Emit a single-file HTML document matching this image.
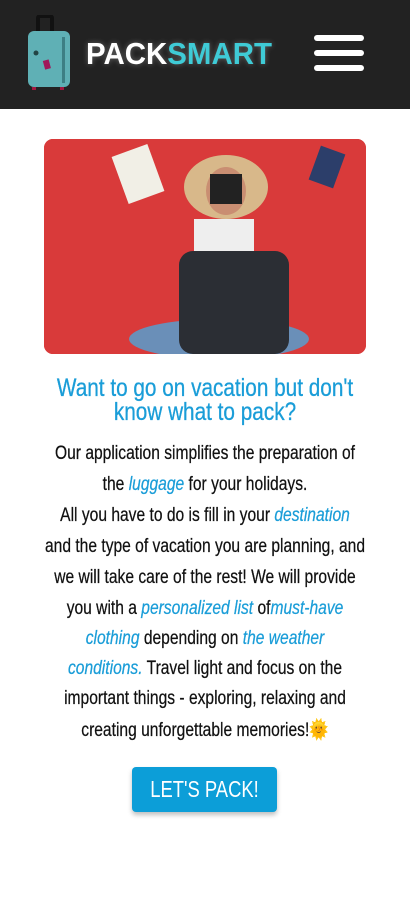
<!DOCTYPE html>
<html><head><meta charset="utf-8"><style>
*{margin:0;padding:0;box-sizing:border-box}
body{width:410px;height:915px;background:#fff;font-family:"Liberation Sans",sans-serif;overflow:hidden;position:relative}
.hdr{height:109px;background:#222;position:relative}
.logo{position:absolute;left:86px;top:36px;font-weight:900;font-size:31px;letter-spacing:0px;color:#fff;text-shadow:0 0 6px rgba(255,255,255,.3);transform:scaleX(.95);transform-origin:left}
.logo span{color:#3fcbd6}
.bar{position:absolute;left:314px;width:50px;height:6px;border-radius:3px;background:#fff}
.img{position:absolute;left:44px;top:139px;width:322px;height:215px;border-radius:9px;overflow:hidden;background:#d63838}
.t{position:absolute;left:-50px;width:510px;text-align:center;white-space:nowrap;transform:scaleX(.8);transform-origin:center}
.h{color:#1a9dd8;font-size:25px;line-height:24px;transform:scaleX(.83);-webkit-text-stroke:.3px #1a9dd8}
.l{font-size:19.5px;color:#111;-webkit-text-stroke:.25px #111}
.l i{color:#1a9dd8;-webkit-text-stroke:.25px #1a9dd8}
.btn{position:absolute;left:132px;top:767px;width:145px;height:45px;background:#0c9ed8;color:#fff;border-radius:4px;box-shadow:0 3px 5px rgba(0,0,0,.25)}
.btn div{position:absolute;left:-20px;width:185px;text-align:center;font-size:23px;line-height:45px;transform:scaleX(.8)}
</style></head><body>
<div class="hdr">
<svg style="position:absolute;left:26px;top:15px" width="46" height="76" viewBox="0 0 46 76">
<rect x="12" y="1" width="14" height="18" rx="2" fill="none" stroke="#111" stroke-width="4"/>
<rect x="2" y="16" width="42" height="56" rx="6" fill="#5fb0b5"/>
<rect x="36" y="22" width="3" height="46" fill="#3d7f84"/>
<circle cx="10" cy="38" r="2.5" fill="#244"/>
<rect x="18" y="45" width="6" height="9" fill="#a0185a" transform="rotate(-15 21 50)"/>
<rect x="6" y="72" width="4" height="3" fill="#a01840"/><rect x="34" y="72" width="4" height="3" fill="#a01840"/>
</svg>
<div class="logo">PACK<span>SMART</span></div>
<div class="bar" style="top:35px"></div><div class="bar" style="top:50px"></div><div class="bar" style="top:65px"></div>
</div>
<div class="img"><svg width="322" height="215" viewBox="0 0 322 215">
<rect width="322" height="215" fill="#d93a3a"/>
<ellipse cx="175" cy="200" rx="90" ry="20" fill="#6a8fb8"/>
<rect x="150" y="80" width="60" height="40" fill="#eee"/>
<ellipse cx="182" cy="48" rx="42" ry="32" fill="#d8b88a"/>
<ellipse cx="182" cy="52" rx="20" ry="24" fill="#c98e72"/>
<rect x="166" y="35" width="32" height="30" fill="#222"/>
<rect x="75" y="10" width="38" height="50" fill="#f1efe6" transform="rotate(-20 94 35)"/>
<rect x="270" y="10" width="26" height="36" fill="#2c3e6a" transform="rotate(20 283 28)"/>
<rect x="135" y="112" width="110" height="103" rx="14" fill="#2b2e34"/>
</svg></div>
<div class="t h" style="top:376px">Want to go on vacation but don't</div>
<div class="t h" style="top:400px">know what to pack?</div>
<div class="t l" style="top:442px">Our application simplifies the preparation of</div>
<div class="t l" style="top:473px">the <i>luggage</i> for your holidays.</div>
<div class="t l" style="top:504px">All you have to do is fill in your <i>destination</i></div>
<div class="t l" style="top:535px">and the type of vacation you are planning, and</div>
<div class="t l" style="top:566px">we will take care of the rest! We will provide</div>
<div class="t l" style="top:597px">you with a <i>personalized list</i> of<i>must-have</i></div>
<div class="t l" style="top:627px"><i>clothing</i> depending on <i>the weather</i></div>
<div class="t l" style="top:657px"><i>conditions.</i> Travel light and focus on the</div>
<div class="t l" style="top:687px">important things - exploring, relaxing and</div>
<div class="t l" style="top:718px">creating unforgettable memories!🌞</div>
<div class="btn"><div>LET'S PACK!</div></div>
</body></html>
